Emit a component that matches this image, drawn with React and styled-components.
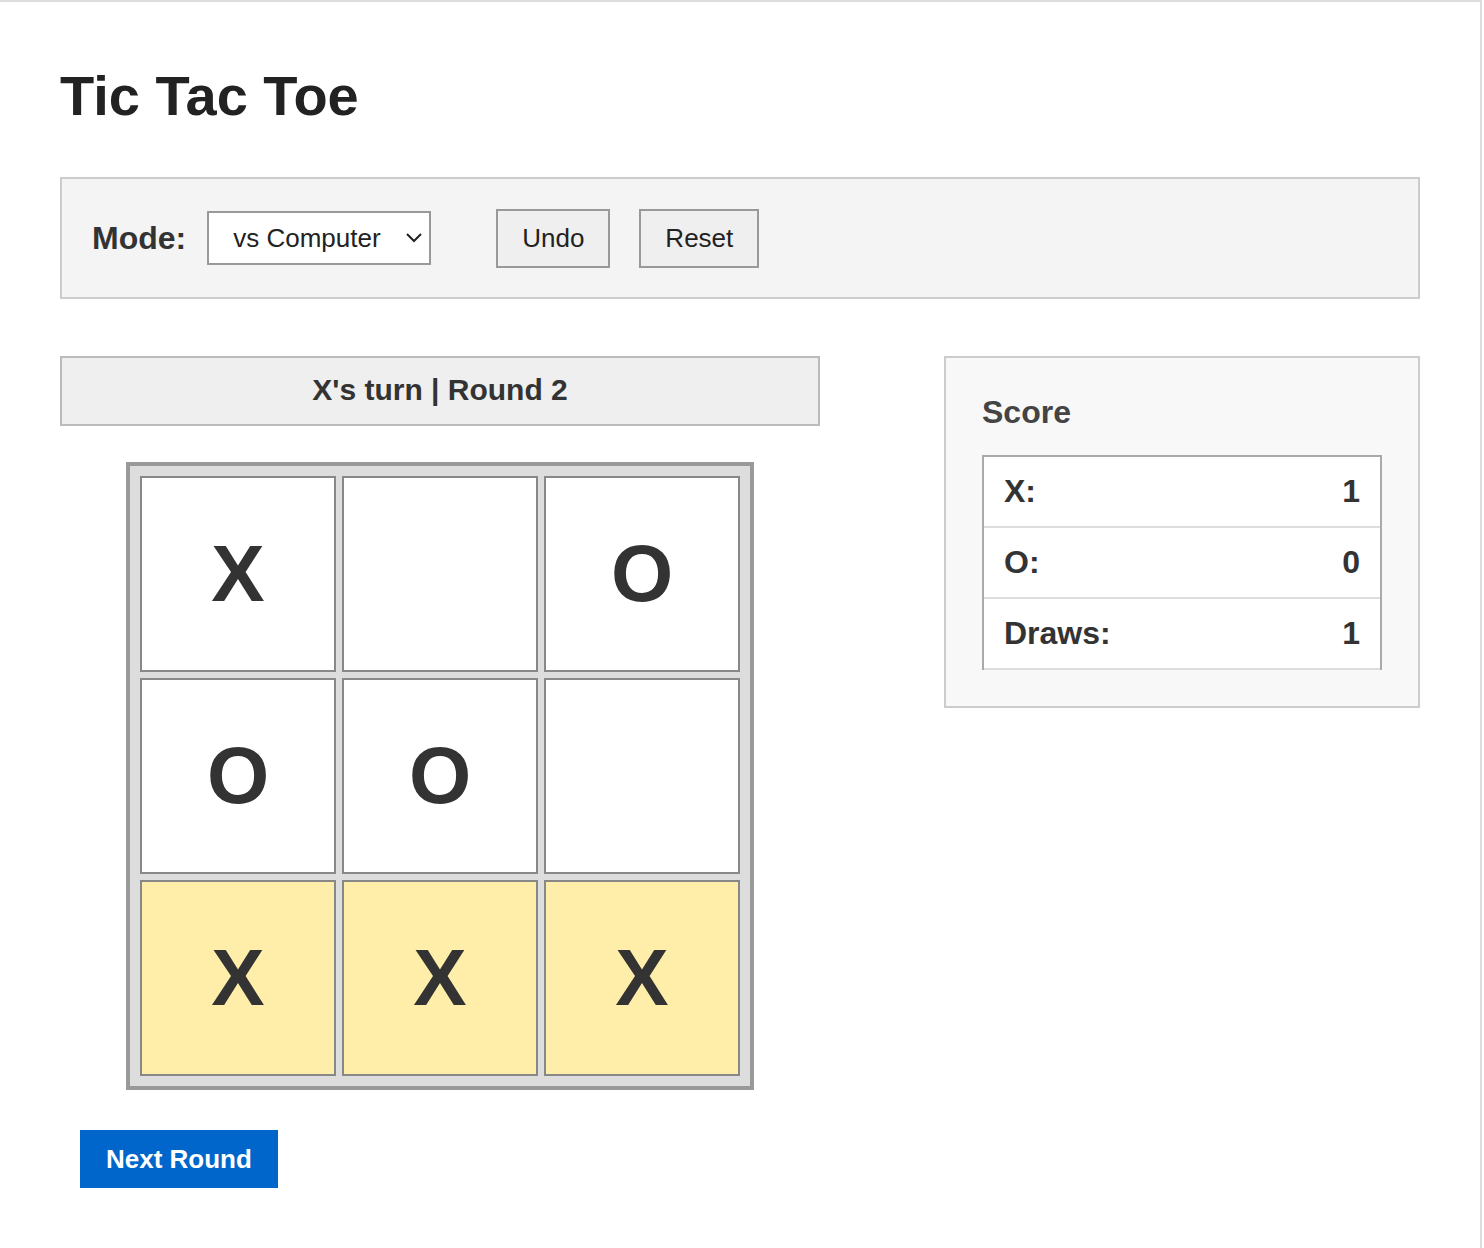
import React from 'react'
import styled, { createGlobalStyle } from 'styled-components'

const Global = createGlobalStyle`
    body {
        margin: 0;
        background: #fff;
        font-family: "Liberation Sans", Arial, sans-serif;
    }
`

const Page = styled.div`
    box-sizing: border-box;
    width: 1482px;
    min-height: 1248px;
    border-top: 2px solid #ddd;
    border-right: 2px solid #ddd;
    padding: 62px 60px 0 60px;
    color: #222;
`

const Title = styled.h1`
    margin: 0;
    font-size: 56px;
    line-height: 64px;
    font-weight: bold;
    color: #222;
`

const Controls = styled.div`
    margin-top: 49px;
    display: flex;
    align-items: center;
    height: 122px;
    box-sizing: border-box;
    padding: 0 30px;
    background: #f4f4f4;
    border: 2px solid #ccc;
`

const Label = styled.label`
    font-size: 32px;
    font-weight: bold;
    color: #333;
    margin-right: 21px;
`

const SelectWrap = styled.div`
    position: relative;
    margin-right: 65px;
`

const Select = styled.select`
    appearance: none;
    display: block;
    font-family: inherit;
    font-size: 26px;
    height: 54px;
    width: 224px;
    padding: 0 40px 0 24px;
    border: 2px solid #999;
    border-radius: 0;
    background: #fff;
    color: #222;
`

const Chevron = styled.svg`
    position: absolute;
    right: 8px;
    top: 50%;
    margin-top: -6px;
    width: 18px;
    height: 11px;
    pointer-events: none;
`

const Button = styled.button`
    font-family: inherit;
    font-size: 26px;
    height: 59px;
    padding: 0 24px;
    margin-right: 29px;
    background: #efefef;
    border: 2px solid #999;
    border-radius: 0;
    color: #222;
`

const Main = styled.div`
    margin-top: 57px;
    display: flex;
    justify-content: space-between;
    align-items: flex-start;
`

const GameColumn = styled.div`
    width: 760px;
`

const Status = styled.div`
    box-sizing: border-box;
    height: 70px;
    display: flex;
    align-items: center;
    justify-content: center;
    padding-bottom: 2px;
    background: #efefef;
    border: 2px solid #bbb;
    font-size: 30px;
    font-weight: bold;
    color: #333;
`

const Board = styled.div`
    margin: 36px auto 0;
    width: 628px;
    box-sizing: border-box;
    display: grid;
    grid-template-columns: repeat(3, 196px);
    grid-auto-rows: 196px;
    gap: 6px;
    padding: 10px;
    background: #ddd;
    border: 4px solid #999;
`

const Cell = styled.div`
    box-sizing: border-box;
    display: flex;
    align-items: center;
    justify-content: center;
    border: 2px solid #888;
    background: ${(props) => (props.win ? '#ffeeaa' : '#fff')};
    font-size: 80px;
    font-weight: bold;
    color: #333;
`

const NextButton = styled.button`
    margin: 40px 0 0 20px;
    height: 58px;
    padding: 0 26px;
    border: none;
    border-radius: 0;
    background: #0066cc;
    color: #fff;
    font-family: inherit;
    font-size: 26px;
    font-weight: bold;
`

const ScorePanel = styled.div`
    width: 476px;
    box-sizing: border-box;
    padding: 36px;
    background: #f8f8f8;
    border: 2px solid #ccc;
`

const ScoreTitle = styled.h2`
    margin: 0 0 25px 0;
    font-size: 32px;
    line-height: 36px;
    font-weight: bold;
    color: #444;
`

const ScoreTable = styled.div`
    border: 2px solid #aaa;
    border-bottom: none;
    background: #fff;
`

const ScoreRow = styled.div`
    display: flex;
    justify-content: space-between;
    align-items: center;
    height: 71px;
    box-sizing: border-box;
    padding: 0 20px;
    border-bottom: 2px solid #ddd;
    font-size: 32px;
    font-weight: bold;
    color: #333;
`

const board = ['X', '', 'O', 'O', 'O', '', 'X', 'X', 'X']
const winLine = [6, 7, 8]

const scores = [
    { label: 'X:', value: 1 },
    { label: 'O:', value: 0 },
    { label: 'Draws:', value: 1 },
]

export default function App() {
    return (
        <>
            <Global />
            <Page>
                <Title>Tic Tac Toe</Title>
                <Controls>
                    <Label htmlFor="mode">Mode:</Label>
                    <SelectWrap>
                        <Select id="mode" defaultValue="cpu">
                            <option value="cpu">vs Computer</option>
                            <option value="pvp">vs Player</option>
                        </Select>
                        <Chevron viewBox="0 0 18 11">
                            <path d="M2 2 L9 9 L16 2" fill="none" stroke="#222" strokeWidth="2" />
                        </Chevron>
                    </SelectWrap>
                    <Button>Undo</Button>
                    <Button>Reset</Button>
                </Controls>
                <Main>
                    <GameColumn>
                        <Status>X's turn | Round 2</Status>
                        <Board>
                            {board.map((v, i) => (
                                <Cell key={i} win={winLine.includes(i)}>{v}</Cell>
                            ))}
                        </Board>
                        <NextButton>Next Round</NextButton>
                    </GameColumn>
                    <ScorePanel>
                        <ScoreTitle>Score</ScoreTitle>
                        <ScoreTable>
                            {scores.map((s) => (
                                <ScoreRow key={s.label}>
                                    <span>{s.label}</span>
                                    <span>{s.value}</span>
                                </ScoreRow>
                            ))}
                        </ScoreTable>
                    </ScorePanel>
                </Main>
            </Page>
        </>
    )
}
